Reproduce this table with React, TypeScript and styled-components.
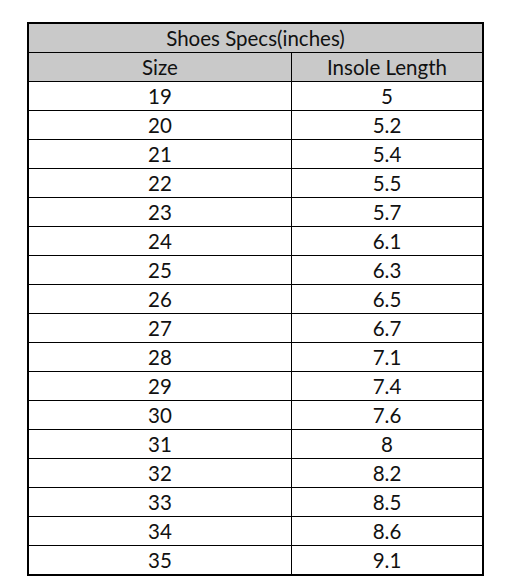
import React from 'react';
import styled, { createGlobalStyle } from 'styled-components';

const rows: [number, string][] = [
  [19, '5'],
  [20, '5.2'],
  [21, '5.4'],
  [22, '5.5'],
  [23, '5.7'],
  [24, '6.1'],
  [25, '6.3'],
  [26, '6.5'],
  [27, '6.7'],
  [28, '7.1'],
  [29, '7.4'],
  [30, '7.6'],
  [31, '8'],
  [32, '8.2'],
  [33, '8.5'],
  [34, '8.6'],
  [35, '9.1'],
];

const GlobalStyle = createGlobalStyle`
  body {
    margin: 0;
    background: #ffffff;
    font-family: Lato, "Liberation Sans", sans-serif;
  }
`;

const Page = styled.div`
  padding: 22px 0 0 27px;
`;

const Grid = styled.div`
  display: grid;
  grid-template-columns: 262px 190px;
  grid-auto-rows: 28px;
  gap: 1px;
  width: 453px;
  background: #000000;
  border: 2px solid #000000;
`;

const Cell = styled.div<{ $head?: boolean; $span?: boolean }>`
  display: flex;
  align-items: center;
  justify-content: center;
  background: ${({ $head }) => ($head ? '#c9c9c9' : '#ffffff')};
  grid-column: ${({ $span }) => ($span ? '1 / span 2' : 'auto')};
  color: #111111;
  font-size: 20.5px;
  line-height: 1;
  padding-top: 1px;
`;

const App = () => (
  <>
    <GlobalStyle />
    <Page>
      <Grid>
        <Cell $head $span>Shoes Specs(inches)</Cell>
        <Cell $head>Size</Cell>
        <Cell $head>Insole Length</Cell>
        {rows.map(([size, len]) => (
          <React.Fragment key={size}>
            <Cell>{size}</Cell>
            <Cell>{len}</Cell>
          </React.Fragment>
        ))}
      </Grid>
    </Page>
  </>
);

export default App;
